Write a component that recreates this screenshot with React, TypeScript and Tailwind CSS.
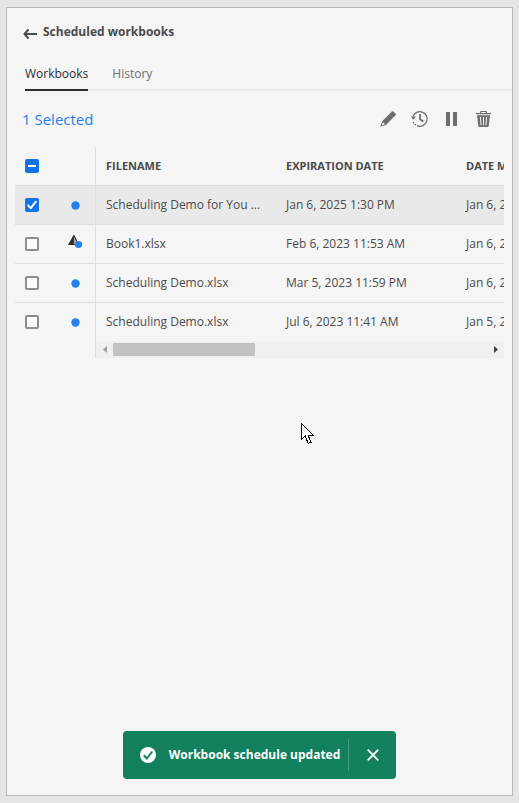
import { useEffect, useRef, useState } from "react";

type Row = { id: number; name: string; expires: string; modified: string; warning?: boolean };

const rows: Row[] = [
  { id: 1, name: "Scheduling Demo for You …", expires: "Jan 6, 2025 1:30 PM", modified: "Jan 6, 2023" },
  { id: 2, name: "Book1.xlsx", expires: "Feb 6, 2023 11:53 AM", modified: "Jan 6, 2023", warning: true },
  { id: 3, name: "Scheduling Demo.xlsx", expires: "Mar 5, 2023 11:59 PM", modified: "Jan 6, 2023" },
  { id: 4, name: "Scheduling Demo.xlsx", expires: "Jul 6, 2023 11:41 AM", modified: "Jan 5, 2023" },
];

function Checkbox({ label, checked, mixed = false, onChange }: { label: string; checked: boolean; mixed?: boolean; onChange: () => void }) {
  const ref = useRef<HTMLInputElement>(null);
  useEffect(() => {
    if (ref.current) ref.current.indeterminate = mixed;
  }, [mixed]);
  return (
    <label className="grid size-[14px] cursor-pointer">
      <input
        ref={ref}
        type="checkbox"
        aria-label={label}
        checked={checked}
        onChange={onChange}
        className="col-start-1 row-start-1 size-[14px] appearance-none rounded-[2px] border-2 border-[#8e8e8e] bg-[#fafafa] checked:border-[#1473e6] checked:bg-[#1473e6] indeterminate:border-[#1473e6] indeterminate:bg-[#1473e6]"
      />
      {(checked || mixed) && (
        <svg viewBox="0 0 14 14" className="pointer-events-none col-start-1 row-start-1 size-[14px]" fill="none" stroke="#fff" strokeWidth="2" aria-hidden="true">
          {mixed ? <path d="M3 7h8" /> : <path d="M3.2 7.4l2.6 2.7 5-6.4" strokeLinecap="round" strokeLinejoin="round" />}
        </svg>
      )}
    </label>
  );
}

function StatusIcon({ warning }: { warning?: boolean }) {
  return warning ? (
    <svg viewBox="0 0 16 16" className="-mt-1 size-4" role="img" aria-label="Warning">
      <path d="M6.500 1L1 11h8.500z" fill="#2c2c2c" />
      <path d="M6.800 3l2.200 1 2 6H6.800z" fill="#a8a8a8" />
      <path d="M6.500 1h.8l3.200 6.500-.8.5-3.200-6z" fill="#2c2c2c" />
      <circle cx="11.500" cy="10.500" r="3.600" fill="#2680eb" />
    </svg>
  ) : (
    <svg viewBox="0 0 16 16" className="size-4" role="img" aria-label="Active">
      <circle cx="8.500" cy="8.500" r="4.200" fill="#2680eb" />
    </svg>
  );
}

export default function App() {
  const [selected, setSelected] = useState<number[]>([1]);
  const toggle = (id: number) => setSelected((s) => (s.includes(id) ? s.filter((x) => x !== id) : [...s, id]));
  const all = selected.length === rows.length;

  return (
    <div className="flex min-h-screen bg-[#e5e5e5] px-1.5 py-[7px] font-['Open_Sans','Noto_Sans',sans-serif] text-xs leading-5 text-[#4b4b4b]">
      <main className="relative flex min-w-0 flex-1 flex-col border border-[#b9b9b9] bg-[#f5f5f5] pt-3.5">
        <header className="flex h-5 items-center gap-1.5 px-4">
          <button type="button" aria-label="Back">
            <svg viewBox="0 0 14 12" className="mt-1 h-3 w-3.5" fill="none" stroke="#4b4b4b" strokeWidth="2" aria-hidden="true">
              <path d="M1.500 6H13.500M5 2L1.500 6 5 10" strokeLinecap="round" strokeLinejoin="round" />
            </svg>
          </button>
          <h1 className="font-bold">Scheduled workbooks</h1>
        </header>

        <div className="ml-[18px] mt-4 flex gap-6 border-b-2 border-[#eaeaea]" role="tablist">
          <button type="button" role="tab" aria-selected="true" className="-mb-0.5 h-[33px] border-b-2 border-[#2c2c2c] text-[#2c2c2c]">
            Workbooks
          </button>
          <button type="button" role="tab" aria-selected="false" className="h-[31px] text-[#6e6e6e]">
            History
          </button>
        </div>

        <div className="flex h-14 items-center justify-between pl-[15px] pr-5">
          <p className="text-[15px] text-[#2680eb]">{selected.length} Selected</p>
          <div className="flex items-center gap-4 text-[#6e6e6e]">
            <button type="button" aria-label="Edit">
              <svg viewBox="0 0 16 16" className="size-4" fill="currentColor" aria-hidden="true">
                <path fillRule="evenodd" d="M11.800.5a1.200 1.200 0 0 1 1.600 0l2.200 2.200a1.200 1.200 0 0 1 0 1.600L5.900 13.900.3 15.800l1.900-5.600zM3 11.200l-1.300 3.200 3.200-1.200z" />
              </svg>
            </button>
            <button type="button" aria-label="Version history">
              <svg viewBox="0 0 18 18" className="-mx-px size-[18px]" fill="none" stroke="currentColor" aria-hidden="true">
                <path d="M2 6.500A7.300 7.300 0 1 1 6.500 15.900" strokeWidth="1.300" />
                <path d="M2.100 12A7.300 7.300 0 0 0 7 16" strokeWidth="1.300" strokeDasharray="1.500 1.300" />
                <path d="M0 6.500h5L2.100 9.700z" fill="currentColor" stroke="none" />
                <path d="M9 4v5.200l3.300 2.400" strokeWidth="1.800" />
              </svg>
            </button>
            <button type="button" aria-label="Pause">
              <svg viewBox="0 0 16 16" className="size-4" fill="currentColor" aria-hidden="true">
                <path d="M2 1h4v14H2zM9 1h4v14H9z" />
              </svg>
            </button>
            <button type="button" aria-label="Delete">
              <svg viewBox="0 0 16 16" className="size-4" fill="currentColor" aria-hidden="true">
                <path fillRule="evenodd" d="M4 2V1q0-1 1-1h5q1 0 1 1v1h4v1.300H0V2zM5.200 2h4.600v-.9H5.200zM1 4.300h13l-1.300 10.900q-.1.800-.9.800H3.200q-.8 0-.9-.8zM3.900 6l.7 8.300h1L4.900 6zM7 6v8.300h1V6zM10.100 6l-.7 8.300h1l.7-8.300z" />
              </svg>
            </button>
          </div>
        </div>

        <div className="mx-2 overflow-hidden">
          <table className="w-[621px] table-fixed border-separate border-spacing-0 text-left">
            <colgroup>
              <col className="w-[46px]" />
              <col className="w-[35px]" />
              <col className="w-[180px]" />
              <col className="w-[180px]" />
              <col className="w-[180px]" />
            </colgroup>
            <thead>
              <tr className="h-[39px] text-[11px] *:border-b *:border-[#dedede]">
                <th className="pl-2.5">
                  <Checkbox label="Select all workbooks" checked={all} mixed={!all && selected.length > 0} onChange={() => setSelected(all ? [] : rows.map((r) => r.id))} />
                </th>
                <th className="border-r" />
                <th className="pl-2.5 font-bold">FILENAME</th>
                <th className="pl-2.5 font-bold">EXPIRATION DATE</th>
                <th className="pl-2.5 font-bold">DATE MODIFIED</th>
              </tr>
            </thead>
            <tbody>
              {rows.map((r) => (
                <tr key={r.id} className={`h-[39px] last:h-[38px] *:border-[#dedede] not-last:*:border-b ${selected.includes(r.id) ? "bg-[#e9e9e9]" : ""}`}>
                  <td className="pl-2.5">
                    <Checkbox label={`Select ${r.name}`} checked={selected.includes(r.id)} onChange={() => toggle(r.id)} />
                  </td>
                  <td className="border-r pl-1.5">
                    <StatusIcon warning={r.warning} />
                  </td>
                  <td className="whitespace-nowrap pl-2.5">{r.name}</td>
                  <td className="pl-2.5">{r.expires}</td>
                  <td className="pl-2.5">{r.modified}</td>
                </tr>
              ))}
            </tbody>
          </table>
          <div className="ml-20 flex h-[17px] items-center border-l border-[#dedede] bg-[#f0f0f0]">
            <button type="button" aria-label="Scroll left" className="grid w-[17px] place-items-center">
              <svg viewBox="0 0 4 7" className="h-[7px] w-1" fill="#a0a0a0" aria-hidden="true"><path d="M4 0v7L0 3.500z" /></svg>
            </button>
            <div className="flex-1">
              <div className="h-[13px] w-[38%] bg-[#c1c1c1]" />
            </div>
            <button type="button" aria-label="Scroll right" className="grid w-[17px] place-items-center">
              <svg viewBox="0 0 4 7" className="h-[7px] w-1" fill="#404040" aria-hidden="true"><path d="M0 0v7l4-3.500z" /></svg>
            </button>
          </div>
        </div>

        <svg viewBox="0 0 13 22" className="pointer-events-none absolute left-[294px] top-[415px] h-[22px] w-[13px]" aria-hidden="true" shapeRendering="crispEdges">
          <path d="M.5.500v16l3.700-3.500 3 7.500 2.800-1.200-3-7.300h5z" fill="#fff" stroke="#000" />
        </svg>

        <div role="status" className="mb-4 mt-auto flex h-12 items-center self-center rounded bg-[#12805c] pl-4 text-white">
          <svg viewBox="0 0 18 18" className="size-[18px]" aria-hidden="true">
            <circle cx="9" cy="9" r="8" fill="#fff" />
            <path d="M4.800 9.300l3 3.200 5.500-7" fill="none" stroke="#12805c" strokeWidth="2" />
          </svg>
          <p className="ml-3 mr-2 font-bold">Workbook schedule updated</p>
          <button type="button" aria-label="Close" className="grid h-8 w-12 place-items-center border-l border-[#3f9a7c]">
            <svg viewBox="0 0 12 12" className="size-3" stroke="#fff" strokeWidth="1.800" aria-hidden="true">
              <path d="M.7.700l10.600 10.600M11.300.700L.7 11.300" />
            </svg>
          </button>
        </div>
      </main>
    </div>
  );
}
